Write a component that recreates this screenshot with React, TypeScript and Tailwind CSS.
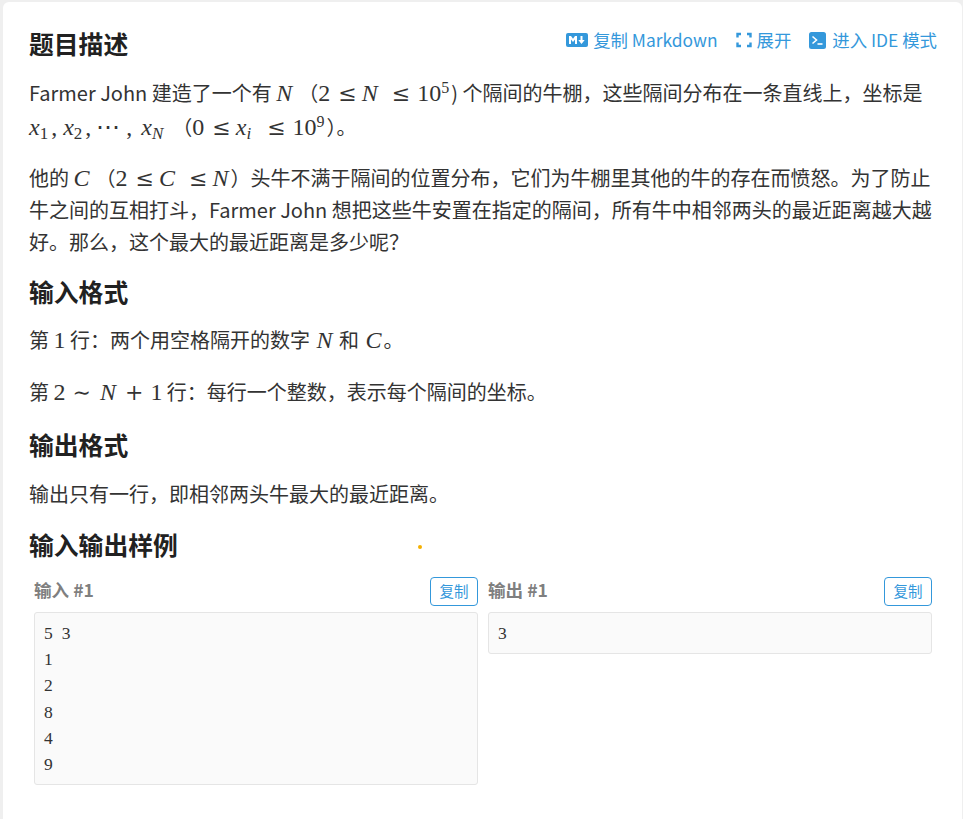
const sans = "font-['Noto_Sans_CJK_SC','Noto_Sans',sans-serif]";

type Props = { children: React.ReactNode; className?: string };

function V({ children, className }: Props) {
  return <span className={`font-['Liberation_Serif',serif] italic text-[24px] leading-none ${className ?? 'px-[2px]'}`}>{children}</span>;
}

function R({ children, className }: Props) {
  return <span className={`font-['Liberation_Serif',serif] text-[24px] leading-none ${className ?? ''}`}>{children}</span>;
}

function Op({ children }: Props) {
  return <span className="font-['DejaVu_Serif',serif] text-[22px] leading-none mx-[7px]">{children}</span>;
}

// ≤ sits closer to what follows than to what comes before it
function Le() {
  return <span className="font-['DejaVu_Serif',serif] text-[22px] leading-none ml-[8px] mr-[5px]">≤</span>;
}

function Sub({ children, italic, className }: { children: React.ReactNode; italic?: boolean; className?: string }) {
  return (
    <span className={`font-['Liberation_Serif',serif] text-[17px] leading-none relative top-[4px] ${italic ? 'italic' : ''} ${className ?? ''}`}>
      {children}
    </span>
  );
}

function Sup({ children }: Props) {
  return <span className="font-['Liberation_Serif',serif] text-[16px] leading-none relative -top-[8px] mr-[2px]">{children}</span>;
}

function Heading({ children, className }: Props) {
  return <h2 className={`text-[24.8px] font-bold leading-[34px] text-[#212121] ${className ?? ''}`}>{children}</h2>;
}

function Sample({ title, lines }: { title: string; lines: string[] }) {
  return (
    <div className="flex-1 min-w-0">
      <div className="flex items-start justify-between h-[29px] mb-[6px]">
        <span className="text-[17.6px] font-bold leading-[26px] text-[#7f7f7f]">{title}</span>
        <button className="w-[48px] h-[29px] rounded-[4px] border border-[#3498db] text-[#3498db] text-[14.5px] leading-none">
          复制
        </button>
      </div>
      <pre className="rounded-[3px] border border-[#e5e5e5] bg-[#fafafa] px-[9px] py-[7px] font-['Liberation_Serif',serif] text-[17.5px] leading-[26.2px] text-[#333] [word-spacing:4.6px]">
        {lines.join('\n')}
      </pre>
    </div>
  );
}

export default function App() {
  return (
    <div className={`h-[819px] overflow-hidden bg-[#efefef] pl-[3px] pt-[2px] pr-[1px] ${sans}`}>
      <div className="h-[830px] rounded-t-[6px] bg-white pl-[26px] pr-[25px] pt-[24px] text-[20px] leading-[34px] text-[#333]">
        <div className="flex items-start justify-between">
          <Heading>题目描述</Heading>
          <div className="flex items-center text-[17.4px] leading-[28px] text-[#3498db]">
            <svg viewBox="0 0 22 14" className="w-[22px] h-[14px] mr-[5px]" fill="#3498db">
              <rect width="22" height="14" rx="2" />
              <path d="M3 11V3h2l2 2.8L9 3h2v8H9V6.5L7 9 5 6.5V11z M14.5 3h2v4h2.2L15.5 11 12.3 7h2.2z" fill="#fff" />
            </svg>
            <span>复制 Markdown</span>
            <svg viewBox="0 0 16 16" className="w-[16px] h-[16px] ml-[18px] mr-[5px]" fill="none" stroke="#3498db" strokeWidth="2.4">
              <path d="M5 2H1.5v3.5M11 2h3.5v3.5M5 14H1.5v-3.5M11 14h3.5v-3.5" />
            </svg>
            <span>展开</span>
            <svg viewBox="0 0 17 17" className="w-[17px] h-[17px] ml-[18px] mr-[6px]">
              <rect width="17" height="17" rx="2.5" fill="#3498db" />
              <path d="M3.5 4.5l4 3.5-4 3.5" fill="none" stroke="#fff" strokeWidth="1.6" />
              <path d="M8.5 12h5" stroke="#fff" strokeWidth="1.6" />
            </svg>
            <span>进入 IDE 模式</span>
          </div>
        </div>

        <p className="mt-[16px]">
          Farmer John 建造了一个有 <V className="pr-[6px]">N</V>（<R>2</R><Le /><V className="pr-[6px]">N</V><Le /><R className="ml-[2px]">10</R><Sup>5</Sup>) 个隔间的牛棚，这些隔间分布在一条直线上，坐标是
          <br />
          <V className="">x</V><Sub>1</Sub><R className="ml-[3px]">,</R><R> </R><V className="">x</V><Sub>2</Sub><R className="ml-[3px]">,</R><R className="tracking-[2px] ml-[5px] mr-[4px]">⋯</R><R className="mr-[3px]">, </R><V className="">x</V><Sub italic>N</Sub><span className="ml-[9px]">（</span><R>0</R><Le /><V className="">x</V><Sub italic className="mr-[8px]">i</Sub><Le /><R className="ml-[2px]">10</R><Sup>9</Sup>）。
        </p>

        <p className="mt-[18px] leading-[32px]">
          他的 <V className="pr-[6px]">C</V>（<R>2</R><Le /><V className="pr-[6px]">C</V><Le /><V className="pr-[2px]">N</V>）头牛不满于隔间的位置分布，它们为牛棚里其他的牛的存在而愤怒。为了防止牛之间的互相打斗，Farmer John 想把这些牛安置在指定的隔间，所有牛中相邻两头的最近距离越大越好。那么，这个最大的最近距离是多少呢？
        </p>

        <Heading className="mt-[16px]">输入格式</Heading>
        <p className="mt-[15px] leading-[33px]">
          第 <R>1</R> 行：两个用空格隔开的数字 <V>N</V> 和 <V>C</V>。
        </p>
        <p className="mt-[19px] leading-[33px]">
          第 <R>2</R><Op>∼</Op><V>N</V><Op>+</Op><R>1</R> 行：每行一个整数，表示每个隔间的坐标。
        </p>

        <Heading className="mt-[19px]">输出格式</Heading>
        <p className="mt-[16px] leading-[33px]">输出只有一行，即相邻两头牛最大的最近距离。</p>

        <Heading className="mt-[17px]">输入输出样例</Heading>
        <div className="relative">
          <div className="absolute left-[389px] -top-[32px] h-[4px] w-[4px] rounded-full bg-[#f5b000]" />
          <div className="flex items-start gap-[10px] mt-[16px] pl-[5px] pr-[5px]">
            <Sample title="输入 #1" lines={['5 3', '1', '2', '8', '4', '9']} />
            <Sample title="输出 #1" lines={['3']} />
          </div>
        </div>
      </div>
    </div>
  );
}
